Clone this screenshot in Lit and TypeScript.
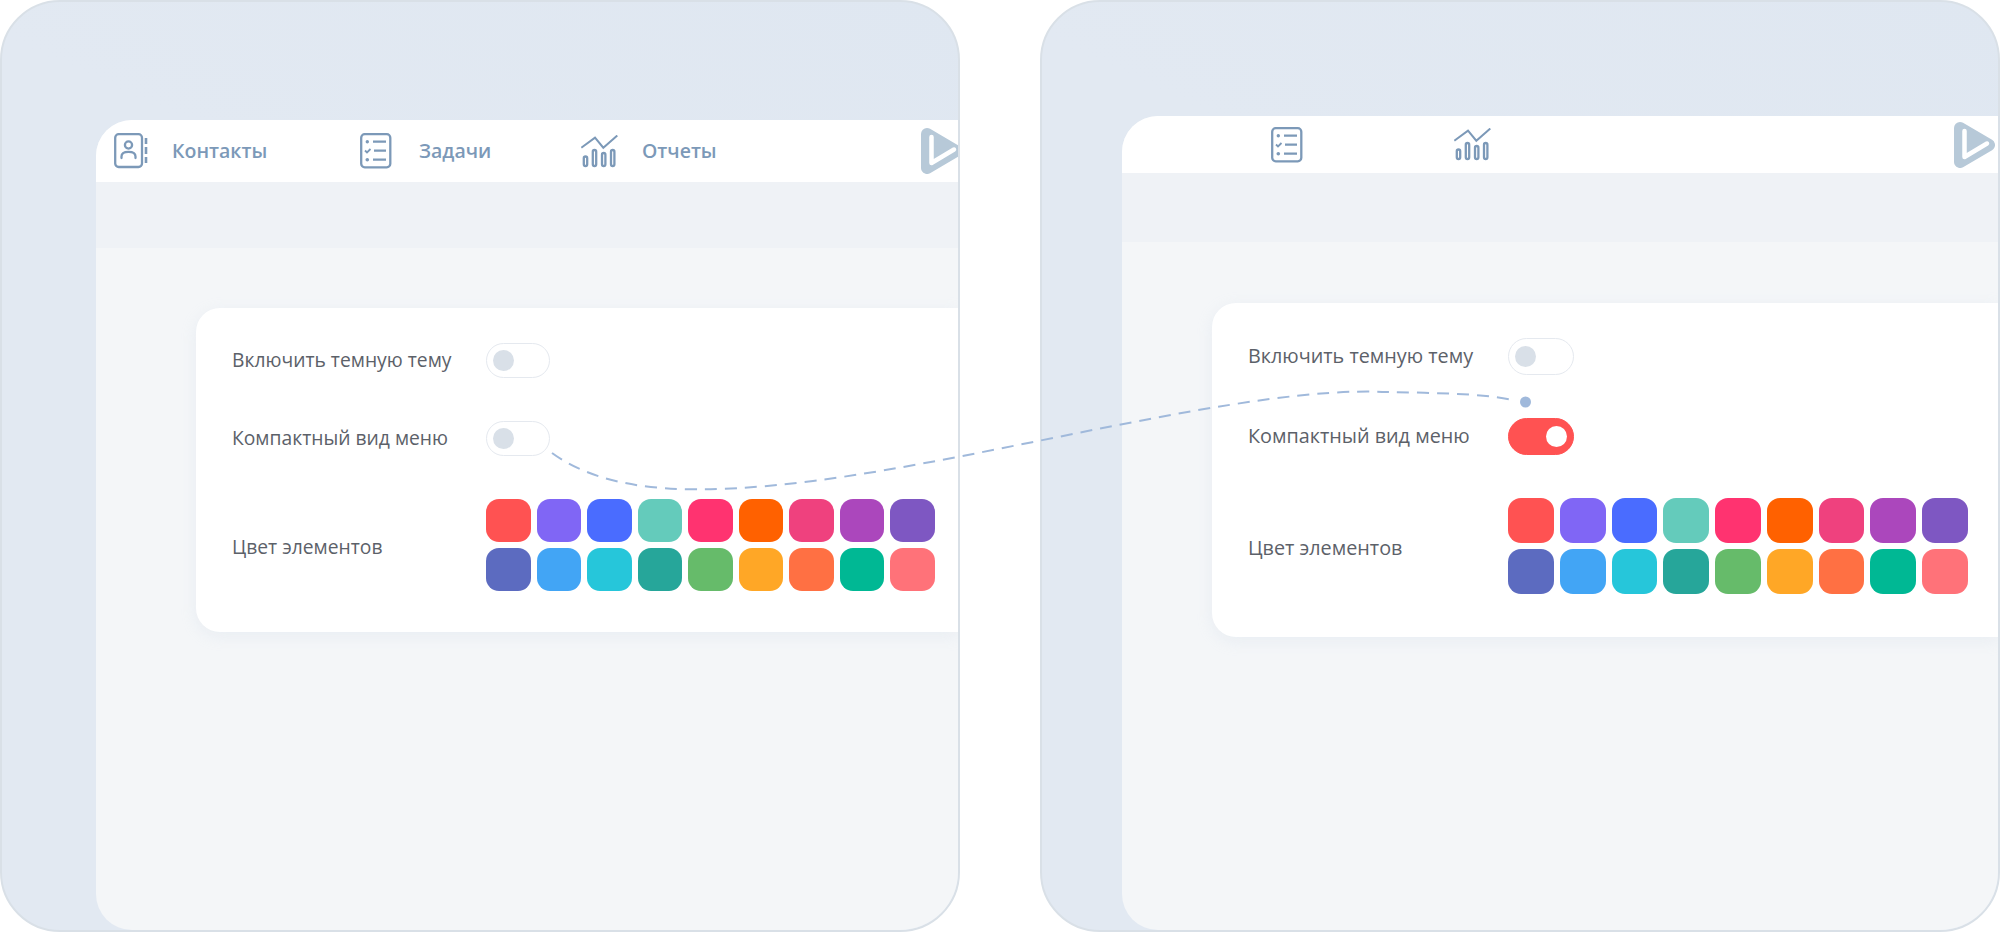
import { LitElement, html, css, svg } from "lit";
import { customElement, property } from "lit/decorators.js";

const COLORS = [
  "#ff5252", "#8066f5", "#4a6cff", "#64cbbb", "#ff3370", "#ff6100", "#ef417e", "#ab47bc", "#7e57c2",
  "#5c6bc0", "#42a5f5", "#26c6da", "#26a69a", "#66bb6a", "#ffa726", "#ff7043", "#00b894", "#ff7279",
];

const contactsIcon = svg`<svg class="ico" width="34" height="36" viewBox="0 0 34 36" fill="none" stroke="#7c99b8" stroke-width="2.300">
  <rect x="1.200" y="1.200" width="26.800" height="32.800" rx="3.500"/>
  <circle cx="14.500" cy="12" r="3.600"/>
  <path d="M7.500 25v-1.500c0-3 2.500-4.600 7-4.600s7 1.600 7 4.600V25" stroke-linecap="round"/>
  <path d="M32 5v6M32 14v7M32 24v6" stroke-width="2.600"/>
</svg>`;

const tasksIcon = svg`<svg class="ico" width="32" height="36" viewBox="0 0 32 36" fill="none" stroke="#7c99b8" stroke-width="2.300">
  <rect x="1.200" y="1.200" width="29.100" height="33.100" rx="3.500"/>
  <circle cx="7.300" cy="8.700" r="1.700" fill="#7c99b8" stroke="none"/>
  <path d="M13 8.700h13M14 17.700h12M13 26.700h13"/>
  <path d="M5 17.500l2 2 3.500-3.500" stroke-width="1.800"/>
  <circle cx="7.300" cy="26.700" r="1.800" fill="#7c99b8" stroke="none"/>
</svg>`;

const chartIcon = svg`<svg class="ico" width="37" height="33" viewBox="0 0 37 33" fill="none" stroke="#7c99b8" stroke-width="2.300">
  <path d="M0.300 12.700L14 2.700l8.300 10L36.300 0.500" stroke-width="2"/>
  <rect x="2.800" y="21.500" width="3.400" height="9.500" rx="1.700"/>
  <rect x="11.800" y="15" width="3.400" height="16" rx="1.700"/>
  <rect x="21" y="18" width="3.400" height="13" rx="1.700"/>
  <rect x="30" y="15" width="3.400" height="16" rx="1.700"/>
</svg>`;

const logo = svg`<svg class="logo" width="41" height="46" viewBox="0 0 41 46">
  <path d="M6 6L35 23L6 40Z" fill="#b7c9d8" stroke="#b7c9d8" stroke-width="12" stroke-linejoin="round"/>
  <path d="M10.500 9V35L33 21.500" fill="none" stroke="#fff" stroke-width="4.500" stroke-linecap="round" stroke-linejoin="round"/>
</svg>`;

@customElement("app-frame")
class AppFrame extends LitElement {
  @property({ type: Boolean }) compact = false;

  static styles = css`
    :host {
      display: block;
      width: 960px;
      height: 932px;
      --label-font: 19.3px;
      --head-h: 62px;
      --band-h: 66px;
      --top: 118px;
      --side: 94px;
      --card-x: 100px;
      --card-top: 60px;
      --label-w: 254px;
      --sw-w: 449px;
      --tg-w: 64px;
      --tg-h: 35px;
      --row-gap: 43px;
      --sw-row: 43px;
      --card-pad-b: 41px;
    }
    :host([compact]) {
      --label-font: 19.8px;
      --head-h: 57px;
      --band-h: 69px;
      --top: 114px;
      --side: 80px;
      --card-x: 90px;
      --card-top: 61px;
      --label-w: 260px;
      --sw-w: 460px;
      --tg-w: 66px;
      --tg-h: 37px;
      --row-gap: 43px;
      --sw-row: 45px;
      --card-pad-b: 43px;
    }
    .frame {
      box-sizing: border-box;
      width: 100%;
      height: 100%;
      border: 2px solid #d9e0e7;
      border-radius: 60px;
      overflow: hidden;
      background: linear-gradient(205deg, #dfe7f1 0%, #e2e9f2 35%);
      padding: var(--top) 0 0 var(--side);
      display: flex;
      font-family: "Open Sans", sans-serif;
    }
    .window {
      flex: 1;
      min-width: 0;
      display: flex;
      flex-direction: column;
      background: #f4f6f8;
      border-radius: 36px 0 0 36px;
      overflow: hidden;
    }
    .head {
      height: var(--head-h);
      flex: none;
      background: #fff;
      display: flex;
      align-items: center;
    }
    .item {
      flex: none;
      display: flex;
      align-items: center;
      color: #7c99b8;
      font-size: 19.5px;
      font-weight: 600;
      line-height: 1;
    }
    .item span { margin-top: -1px; }
    .ico { display: block; flex: none; }
    .i1 { margin-left: 18px; width: 246px; gap: 24px; }
    .i2 { width: 221px; gap: 27px; }
    .i3 { width: 340px; gap: 24px; }
    .t1 { margin-left: 149px; width: 183px; }
    .t2 { width: 500px; }
    .logo { display: block; flex: none; }
    .band {
      height: var(--band-h);
      flex: none;
      background: #eff2f6;
    }
    .card {
      margin: var(--card-top) 0 0 var(--card-x);
      background: #fff;
      border-radius: 24px 0 0 24px;
      box-shadow: 0 4px 16px rgba(190, 205, 225, 0.2);
      padding: 35px 0 var(--card-pad-b) 36px;
      display: grid;
      grid-template-columns: var(--label-w) var(--sw-w);
      row-gap: var(--row-gap);
      align-items: center;
    }
    .label {
      font-size: var(--label-font);
      color: #5c6169;
      line-height: 1;
      white-space: nowrap;
      margin-top: -2px;
    }
    .label.low { margin-top: 4px; }
    .toggle {
      box-sizing: border-box;
      width: var(--tg-w);
      height: var(--tg-h);
      border: 1.500px solid #e5e9ef;
      border-radius: 20px;
      background: #fff;
      display: flex;
      align-items: center;
      padding: 0 6px;
    }
    .toggle span {
      width: 21px;
      height: 21px;
      border-radius: 50%;
      background: #d9e0e8;
    }
    .toggle.on {
      background: #ff5252;
      border-color: #ff5252;
      justify-content: flex-end;
    }
    .toggle.on span { background: #fff; }
    .swatches {
      display: grid;
      grid-template-columns: repeat(9, 1fr);
      grid-auto-rows: var(--sw-row);
      gap: 6px;
    }
    .swatches i {
      display: block;
      border-radius: 13px;
    }
  `;

  render() {
    const c = this.compact;
    return html`<div class="frame">
      <div class="window">
        <div class="head">
          ${c
            ? html`<div class="item t1">${tasksIcon}</div>
                <div class="item t2">${chartIcon}</div>
                ${logo}`
            : html`<div class="item i1">${contactsIcon}<span>Контакты</span></div>
                <div class="item i2">${tasksIcon}<span>Задачи</span></div>
                <div class="item i3">${chartIcon}<span>Отчеты</span></div>
                ${logo}`}
        </div>
        <div class="band"></div>
        <div class="card">
          <div class="label">Включить темную тему</div>
          <div class="toggle"><span></span></div>
          <div class="label">Компактный вид меню</div>
          <div class="toggle ${c ? "on" : ""}"><span></span></div>
          <div class="label low">Цвет элементов</div>
          <div class="swatches">
            ${COLORS.map((col) => html`<i style="background:${col}"></i>`)}
          </div>
        </div>
      </div>
    </div>`;
  }
}

@customElement("app-root")
class AppRoot extends LitElement {
  static styles = css`
    :host {
      display: block;
      width: 2000px;
      height: 932px;
      position: relative;
      background: #fff;
    }
    .row {
      display: flex;
      gap: 80px;
    }
    .link {
      position: absolute;
      left: 0;
      top: 0;
      pointer-events: none;
    }
  `;
  render() {
    return html`<div class="row">
        <app-frame></app-frame>
        <app-frame compact></app-frame>
      </div>
      <svg class="link" width="2000" height="932" viewBox="0 0 2000 932" fill="none">
        <path d="M552 453C610 495 700 495 813 481C1000 457 1250 385 1387 392C1430 393 1480 393 1512 400" stroke="#a0b9db" stroke-width="2" stroke-dasharray="12 8"/>
        <circle cx="1525.500" cy="402" r="5.500" fill="#a0b9db"/>
      </svg>`;
  }
}
